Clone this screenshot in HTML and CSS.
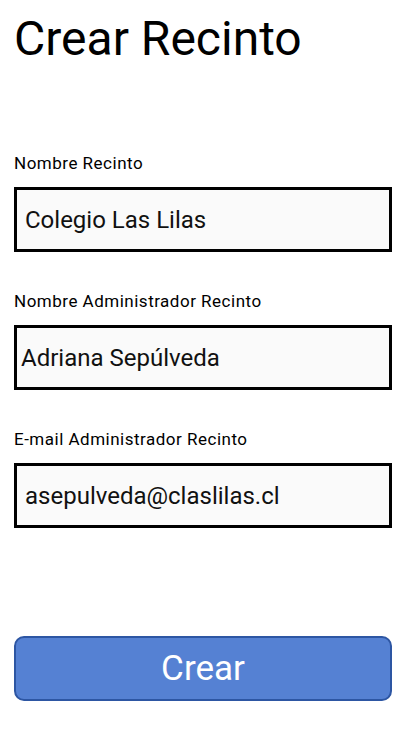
FILE: index.html
```html
<!DOCTYPE html>
<html lang="es">
<head>
<meta charset="utf-8">
<title>Crear Recinto</title>
<link rel="stylesheet" href="styles.css">
</head>
<body>
<main class="page">
  <h1 class="title">Crear Recinto</h1>
  <form class="form">
    <div class="field">
      <label class="label" for="nombre">Nombre Recinto</label>
      <input class="input" id="nombre" type="text" value="Colegio Las Lilas">
    </div>
    <div class="field">
      <label class="label" for="admin">Nombre Administrador Recinto</label>
      <input class="input input--tight" id="admin" type="text" value="Adriana Sepúlveda">
    </div>
    <div class="field">
      <label class="label" for="email">E-mail Administrador Recinto</label>
      <input class="input" id="email" type="text" value="asepulveda@claslilas.cl">
    </div>
    <button class="button" type="button">Crear</button>
  </form>
</main>
</body>
</html>
```

FILE: styles.css
```css
html, body {
  margin: 0;
  padding: 0;
  background: #ffffff;
}

body {
  font-family: Roboto, "Liberation Sans", sans-serif;
  color: #000000;
}

.page {
  padding: 11px 19px 0 14px;
  display: flex;
  flex-direction: column;
}

.title {
  margin: 0;
  font-size: 48px;
  line-height: 56px;
  font-weight: 400;
  height: 56px;
}

.form {
  display: flex;
  flex-direction: column;
  margin-top: 86px;
  gap: 39px;
}

.field {
  display: flex;
  flex-direction: column;
  gap: 14px;
}

.label {
  font-size: 17px;
  line-height: 20px;
  letter-spacing: 0.5px;
}

.input {
  box-sizing: border-box;
  width: 100%;
  height: 65px;
  margin: 0;
  border: 3px solid #000000;
  border-radius: 0;
  background: #fafafa;
  padding: 0 0 0 8px;
  font-family: Roboto, "Liberation Sans", sans-serif;
  font-size: 24px;
  color: #111111;
  outline: none;
}

.input--tight {
  padding-left: 4px;
}

.button {
  box-sizing: border-box;
  margin-top: 69px;
  width: 100%;
  height: 65px;
  border: 2px solid #2d56a3;
  border-radius: 10px;
  background: #5581d3;
  color: #ffffff;
  font-family: Roboto, "Liberation Sans", sans-serif;
  font-size: 35px;
  padding: 0;
}
```
